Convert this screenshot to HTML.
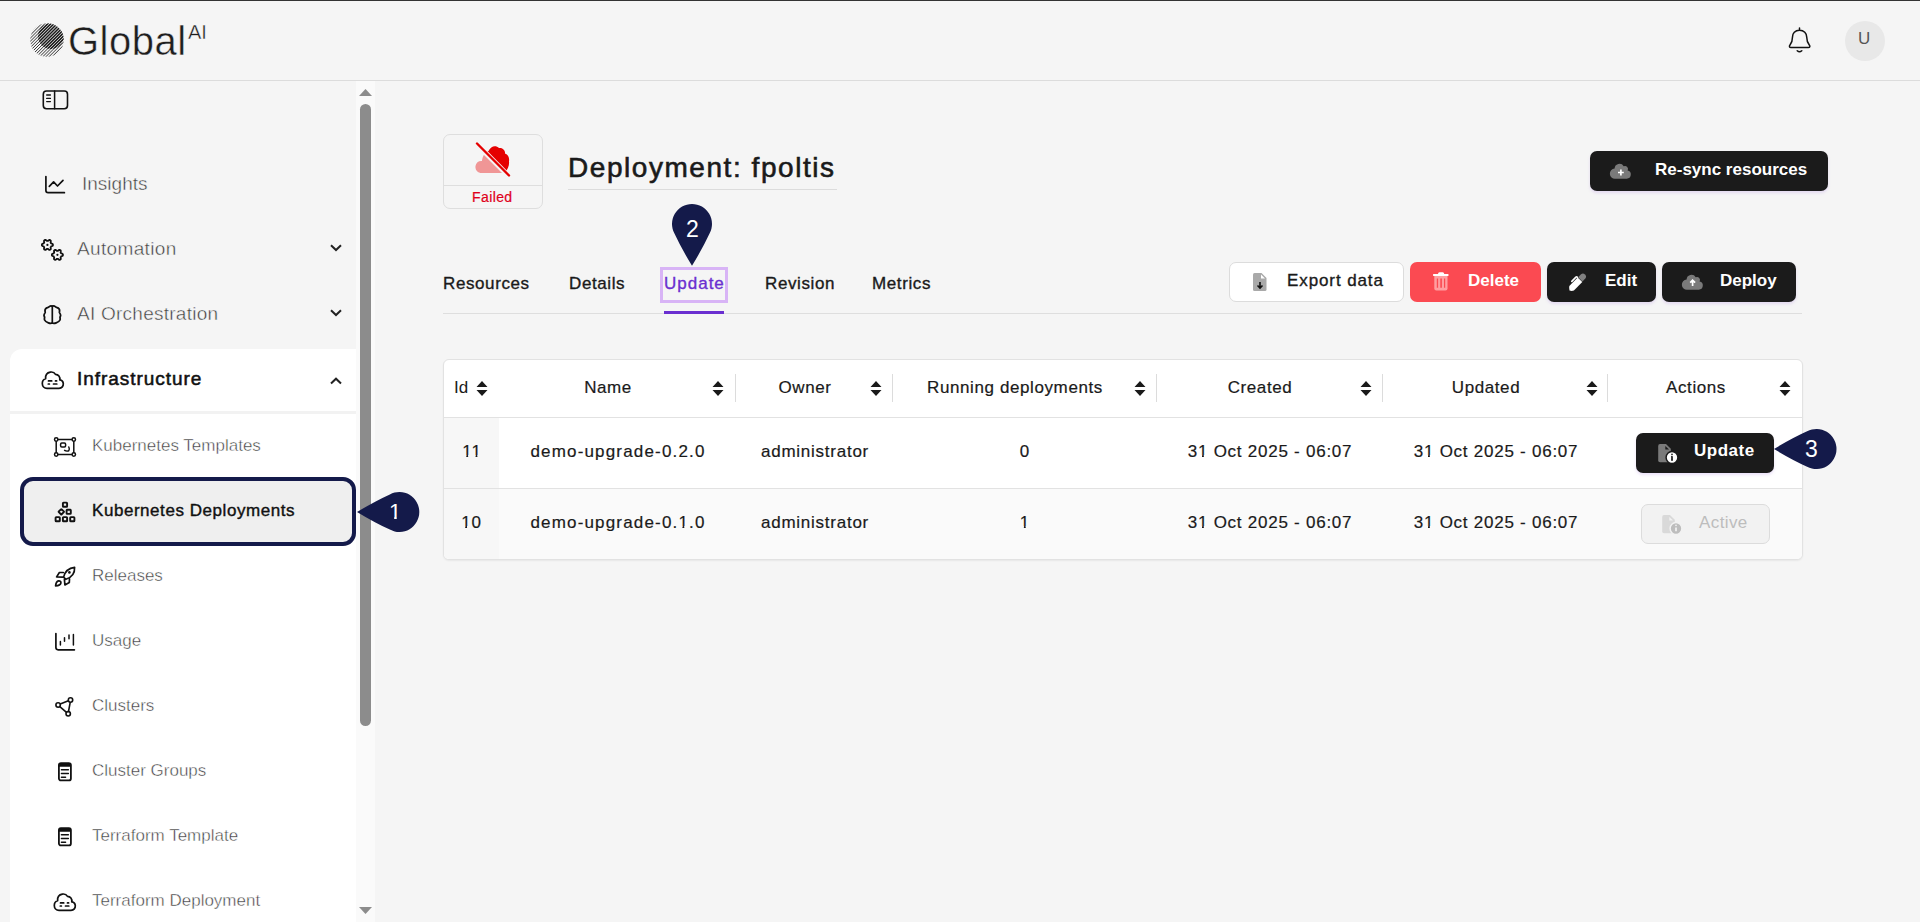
<!DOCTYPE html>
<html><head><meta charset="utf-8">
<style>
*{box-sizing:border-box;margin:0;padding:0}
html,body{width:1920px;height:922px;overflow:hidden;background:#f5f5f5;font-family:"Liberation Sans",sans-serif;color:#1a1a1a}
.a{position:absolute}
.t{position:absolute;white-space:nowrap;line-height:1em}
svg{position:absolute;overflow:visible}
</style></head><body>
<div class="a" style="left:0;top:0;width:1920px;height:1px;background:#333"></div>
<div class="a" style="left:0;top:80px;width:1920px;height:1px;background:#dcdcdc"></div>

<svg style="left:30px;top:23px" width="34" height="34" viewBox="0 0 34 34">
  <defs><clipPath id="lc"><circle cx="17" cy="17" r="16.8"/></clipPath>
  <clipPath id="lc2"><circle cx="21" cy="13" r="13"/></clipPath></defs>
  <g clip-path="url(#lc)" stroke="#1c1c1c" stroke-width="0.9" fill="none"><path d="M-40.0 40 L0.0 0 M-36.9 40 L3.1 0 M-33.8 40 L6.2 0 M-30.7 40 L9.3 0 M-27.6 40 L12.4 0 M-24.5 40 L15.5 0 M-21.4 40 L18.6 0 M-18.3 40 L21.7 0 M-15.2 40 L24.8 0 M-12.1 40 L27.9 0 M-9.0 40 L31.0 0 M-5.9 40 L34.1 0 M-2.8 40 L37.2 0 M0.3 40 L40.3 0 M3.4 40 L43.4 0 M6.5 40 L46.5 0 M9.6 40 L49.6 0 M12.7 40 L52.7 0 M15.8 40 L55.8 0 M18.9 40 L58.9 0 M22.0 40 L62.0 0 M25.1 40 L65.1 0 M28.2 40 L68.2 0 M31.3 40 L71.3 0 M34.4 40 L74.4 0 M37.5 40 L77.5 0 "/></g>
  <g clip-path="url(#lc2)" stroke="#1c1c1c" stroke-width="1.5" fill="none"><g clip-path="url(#lc)"><path d="M-40.0 40 L0.0 0 M-36.9 40 L3.1 0 M-33.8 40 L6.2 0 M-30.7 40 L9.3 0 M-27.6 40 L12.4 0 M-24.5 40 L15.5 0 M-21.4 40 L18.6 0 M-18.3 40 L21.7 0 M-15.2 40 L24.8 0 M-12.1 40 L27.9 0 M-9.0 40 L31.0 0 M-5.9 40 L34.1 0 M-2.8 40 L37.2 0 M0.3 40 L40.3 0 M3.4 40 L43.4 0 M6.5 40 L46.5 0 M9.6 40 L49.6 0 M12.7 40 L52.7 0 M15.8 40 L55.8 0 M18.9 40 L58.9 0 M22.0 40 L62.0 0 M25.1 40 L65.1 0 M28.2 40 L68.2 0 M31.3 40 L71.3 0 M34.4 40 L74.4 0 M37.5 40 L77.5 0 "/></g></g>
</svg>
<div class="t" style="left:68px;top:21px;font-size:40px;color:#1e1e1e;letter-spacing:0.5px;-webkit-text-stroke:0.45px #f5f5f5">Global</div>
<div class="t" style="left:188px;top:22px;font-size:20px;color:#1c1c1c;-webkit-text-stroke:0.4px #f5f5f5">AI</div>
<svg style="left:1785px;top:25px" width="30" height="30" viewBox="0 0 30 30"><path d="M14.5 5.3 C10 5.3 7.5 8.5 7.5 12 C7.5 15.5 7 17.5 5 20 C4 21.3 4.3 22.6 6 22.6 H23.3 C25 22.6 25.3 21.3 24.3 20 C22.3 17.5 21.7 15.5 21.7 12 C21.7 8.5 19 5.3 14.5 5.3 Z M14.5 3 V5.3" fill="none" stroke="#111" stroke-linecap="round" stroke-linejoin="round" stroke-width="1.5"/><path d="M12.2 25.8 Q14.5 27.8 16.8 25.8" fill="none" stroke="#111" stroke-linecap="round" stroke-linejoin="round" stroke-width="1.5"/></svg>
<div class="a" style="left:1845px;top:21px;width:40px;height:40px;border-radius:50%;background:#e8e8e8"></div>
<div class="t" style="left:1858px;top:30px;font-size:17px;color:#555;">U</div>
<div class="a" style="left:356px;top:81px;width:19px;height:841px;background:#fafafa"></div>
<svg style="left:359px;top:88px" width="13" height="8"><path d="M0 8 L6.5 1 L13 8Z" fill="#8c8c8c"/></svg>
<div class="a" style="left:360px;top:104px;width:11px;height:622px;border-radius:6px;background:#8c8c8c"></div>
<svg style="left:359px;top:907px" width="13" height="8"><path d="M0 0 L6.5 7 L13 0Z" fill="#8c8c8c"/></svg>
<svg style="left:40px;top:85px" width="32" height="30" viewBox="0 0 32 30"><rect x="3.3" y="6" width="24.2" height="17.7" rx="3.2" fill="none" stroke="#111" stroke-linecap="round" stroke-linejoin="round" stroke-width="1.6"/><path d="M14.6 6 V23.7" fill="none" stroke="#111" stroke-linecap="round" stroke-linejoin="round" stroke-width="1.5"/><path d="M6.7 10 H10.4 M6.7 13.4 H10.4 M6.7 16.6 H10.4" fill="none" stroke="#111" stroke-linecap="round" stroke-linejoin="round" stroke-width="1.4"/></svg>
<svg style="left:40px;top:170px" width="30" height="30" viewBox="0 0 30 30"><path d="M5.9 6.5 V20.5 Q5.9 22.7 8.1 22.7 H24.4" fill="none" stroke="#111" stroke-linecap="round" stroke-linejoin="round" stroke-width="1.7"/><path d="M9.3 16.3 L13.6 11.9 L17.5 16 L23 10.3" fill="none" stroke="#111" stroke-linecap="round" stroke-linejoin="round" stroke-width="1.7"/></svg>
<div class="t" style="left:82px;top:174px;font-size:19px;color:#3c3c3c;-webkit-text-stroke:0.45px #f5f5f5;">Insights</div>
<svg style="left:38px;top:235px" width="30" height="30" viewBox="0 0 30 30"><path d="M10.06 5.81 L10.41 5.49 L10.81 5.17 L11.25 4.92 L11.65 4.88 L11.98 5.04 L12.29 5.22 L12.59 5.42 L12.78 5.75 L12.79 6.26 L12.72 6.77 L12.63 7.23 L12.64 7.56 L12.79 7.78 L12.92 8.00 L13.04 8.24 L13.28 8.42 L13.72 8.57 L14.20 8.76 L14.64 9.02 L14.87 9.34 L14.90 9.70 L14.90 10.06 L14.88 10.42 L14.68 10.75 L14.25 11.01 L13.78 11.21 L13.32 11.36 L13.05 11.54 L12.93 11.77 L12.80 12.00 L12.66 12.22 L12.62 12.52 L12.71 12.98 L12.78 13.49 L12.79 14.00 L12.62 14.36 L12.32 14.56 L12.01 14.74 L11.69 14.90 L11.30 14.90 L10.86 14.66 L10.45 14.34 L10.10 14.03 L9.81 13.88 L9.55 13.90 L9.28 13.90 L9.02 13.88 L8.74 13.99 L8.39 14.31 L7.99 14.63 L7.55 14.88 L7.15 14.92 L6.82 14.76 L6.51 14.58 L6.21 14.38 L6.02 14.05 L6.01 13.54 L6.08 13.03 L6.17 12.57 L6.16 12.24 L6.01 12.02 L5.88 11.80 L5.76 11.56 L5.52 11.38 L5.08 11.23 L4.60 11.04 L4.16 10.78 L3.93 10.46 L3.90 10.10 L3.90 9.74 L3.92 9.38 L4.12 9.05 L4.55 8.79 L5.02 8.59 L5.48 8.44 L5.75 8.26 L5.87 8.03 L6.00 7.80 L6.14 7.58 L6.18 7.28 L6.09 6.82 L6.02 6.31 L6.01 5.80 L6.18 5.44 L6.48 5.24 L6.79 5.06 L7.11 4.90 L7.50 4.90 L7.94 5.14 L8.35 5.46 L8.70 5.77 L8.99 5.92 L9.25 5.90 L9.52 5.90 L9.78 5.92Z" fill="none" stroke="#111" stroke-linecap="round" stroke-linejoin="round" stroke-width="1.8"/><circle cx="9.4" cy="9.9" r="1.1" fill="#111"/><path d="M20.06 15.76 L20.41 15.44 L20.81 15.12 L21.25 14.87 L21.65 14.83 L21.98 14.99 L22.29 15.17 L22.59 15.37 L22.78 15.70 L22.79 16.21 L22.72 16.72 L22.63 17.18 L22.64 17.51 L22.79 17.73 L22.92 17.95 L23.04 18.19 L23.28 18.37 L23.72 18.52 L24.20 18.71 L24.64 18.97 L24.87 19.29 L24.90 19.65 L24.90 20.01 L24.88 20.37 L24.68 20.70 L24.25 20.96 L23.78 21.16 L23.32 21.31 L23.05 21.49 L22.93 21.72 L22.80 21.95 L22.66 22.17 L22.62 22.47 L22.71 22.93 L22.78 23.44 L22.79 23.95 L22.62 24.31 L22.32 24.51 L22.01 24.69 L21.69 24.85 L21.30 24.85 L20.86 24.61 L20.45 24.29 L20.10 23.98 L19.81 23.83 L19.55 23.85 L19.28 23.85 L19.02 23.83 L18.74 23.94 L18.39 24.26 L17.99 24.58 L17.55 24.83 L17.15 24.87 L16.82 24.71 L16.51 24.53 L16.21 24.33 L16.02 24.00 L16.01 23.49 L16.08 22.98 L16.17 22.52 L16.16 22.19 L16.01 21.97 L15.88 21.75 L15.76 21.51 L15.52 21.33 L15.08 21.18 L14.60 20.99 L14.16 20.73 L13.93 20.41 L13.90 20.05 L13.90 19.69 L13.92 19.33 L14.12 19.00 L14.55 18.74 L15.02 18.54 L15.48 18.39 L15.75 18.21 L15.87 17.98 L16.00 17.75 L16.14 17.53 L16.18 17.23 L16.09 16.77 L16.02 16.26 L16.01 15.75 L16.18 15.39 L16.48 15.19 L16.79 15.01 L17.11 14.85 L17.50 14.85 L17.94 15.09 L18.35 15.41 L18.70 15.72 L18.99 15.87 L19.25 15.85 L19.52 15.85 L19.78 15.87Z" fill="none" stroke="#111" stroke-linecap="round" stroke-linejoin="round" stroke-width="1.8"/><circle cx="19.4" cy="19.85" r="1.1" fill="#111"/></svg>
<div class="t" style="left:77px;top:239px;font-size:19px;color:#3c3c3c;-webkit-text-stroke:0.45px #f5f5f5;letter-spacing:0.35px">Automation</div>
<svg style="left:330px;top:244px" width="12" height="8"><path d="M1 1.2 L6 6 L11 1.2" fill="none" stroke="#222" stroke-width="2"/></svg>
<svg style="left:38px;top:300px" width="30" height="30" viewBox="0 0 30 30"><path d="M14.3 6.3 C13.5 5.8 12.2 5.9 11.3 6.6 C10.7 7.2 10.3 7.5 9.5 7.7 C8 8.1 7 9.3 7 10.8 C7 11.5 7.3 11.9 7.2 12.4 C7 13.2 6.1 14 6 15.2 C5.9 16.2 6.6 16.6 6.6 17.3 C6.5 18.2 6.2 19 6.6 20 C7.2 21.6 9 22.3 10.4 22.8 C11.6 23.3 13 23.6 14.3 23" fill="none" stroke="#111" stroke-linecap="round" stroke-linejoin="round" stroke-width="1.8"/><path d="M14.3 6.3 C13.5 5.8 12.2 5.9 11.3 6.6 C10.7 7.2 10.3 7.5 9.5 7.7 C8 8.1 7 9.3 7 10.8 C7 11.5 7.3 11.9 7.2 12.4 C7 13.2 6.1 14 6 15.2 C5.9 16.2 6.6 16.6 6.6 17.3 C6.5 18.2 6.2 19 6.6 20 C7.2 21.6 9 22.3 10.4 22.8 C11.6 23.3 13 23.6 14.3 23" transform="translate(28.6,0) scale(-1,1)" fill="none" stroke="#111" stroke-linecap="round" stroke-linejoin="round" stroke-width="1.8"/><path d="M14.3 6.3 V23" fill="none" stroke="#111" stroke-linecap="round" stroke-linejoin="round" stroke-width="1.7"/></svg>
<div class="t" style="left:77px;top:304px;font-size:19px;color:#3c3c3c;-webkit-text-stroke:0.45px #f5f5f5;letter-spacing:0.25px">AI Orchestration</div>
<svg style="left:330px;top:309px" width="12" height="8"><path d="M1 1.2 L6 6 L11 1.2" fill="none" stroke="#222" stroke-width="2"/></svg>
<div class="a" style="left:10px;top:349px;width:346px;height:573px;background:#fff;border-top-left-radius:12px"></div>
<div class="a" style="left:10px;top:411px;width:346px;height:3px;background:#f2f2f2"></div>
<svg style="left:38px;top:365px" width="30" height="30" viewBox="0 0 30 30"><path d="M9 23.3 H21 C24 23.3 25.4 21 25.3 18.8 C25.2 16.7 23.8 15 21.8 14.8 C22.2 11.8 20.5 9.5 17.5 9.3 C16.3 7.2 14.2 6.8 12.3 7.1 C9.5 7.6 7.3 10 7.6 13.7 C5.3 14.3 4.3 16.4 4.3 18.5 C4.3 21.2 6.2 23.3 9 23.3 Z" fill="none" stroke="#111" stroke-linecap="round" stroke-linejoin="round" stroke-width="1.7"/><path d="M10.5 15.9 H13.7 M17.5 15.9 H18.6 M10.3 19 H11.4 M15.5 19 H18.8" fill="none" stroke="#111" stroke-linecap="round" stroke-linejoin="round" stroke-width="1.7"/></svg>
<div class="t" style="left:77px;top:369px;font-size:19px;color:#111;letter-spacing:0.95px;-webkit-text-stroke:0.55px #111">Infrastructure</div>
<svg style="left:330px;top:376px" width="12" height="9"><path d="M1 7.5 L6 2.7 L11 7.5" fill="none" stroke="#222" stroke-width="2"/></svg>
<svg style="left:50px;top:432px" width="30" height="30" viewBox="0 0 30 30"><path d="M7.9 7.5 H22.1 M7.9 22.5 H22.1 M6.2 9.2 V20.8 M23.8 9.2 V20.8" fill="none" stroke="#111" stroke-linecap="round" stroke-linejoin="round" stroke-width="1.5"/><circle cx="6.2" cy="7.5" r="1.7" fill="#fff" stroke="#111" stroke-width="1.5"/><circle cx="23.8" cy="7.5" r="1.7" fill="#fff" stroke="#111" stroke-width="1.5"/><circle cx="6.2" cy="22.5" r="1.7" fill="#fff" stroke="#111" stroke-width="1.5"/><circle cx="23.8" cy="22.5" r="1.7" fill="#fff" stroke="#111" stroke-width="1.5"/><rect x="10.6" y="11" width="5" height="3.9" rx="1.2" fill="none" stroke="#111" stroke-linecap="round" stroke-linejoin="round" stroke-width="1.5"/><path d="M18.8 15 C19.5 16.5 19.4 18 18.8 18.6 C18.2 19.2 16 19.2 14.6 18.3" fill="none" stroke="#111" stroke-linecap="round" stroke-linejoin="round" stroke-width="1.5"/></svg>
<div class="t" style="left:92px;top:437px;font-size:17px;color:#3c3c3c;-webkit-text-stroke:0.45px #fff;">Kubernetes Templates</div>
<div class="a" style="left:20px;top:477px;width:336px;height:69px;border:4.5px solid #141a4a;border-radius:13px;background:#efefef"></div>
<svg style="left:50px;top:497px" width="30" height="30" viewBox="0 0 30 30"><rect x="12.9" y="5.6" width="4.2" height="4.2" rx="0.6" fill="none" stroke="#111" stroke-linecap="round" stroke-linejoin="round" stroke-width="1.9"/><rect x="9.3" y="12.8" width="4" height="4" rx="0.5" transform="rotate(45 11.3 14.8)" fill="none" stroke="#111" stroke-linecap="round" stroke-linejoin="round" stroke-width="1.9"/><rect x="16.599999999999998" y="12.700000000000001" width="4.2" height="4.2" rx="0.6" fill="none" stroke="#111" stroke-linecap="round" stroke-linejoin="round" stroke-width="1.9"/><rect x="5.6" y="20.099999999999998" width="4.2" height="4.2" rx="0.6" fill="none" stroke="#111" stroke-linecap="round" stroke-linejoin="round" stroke-width="1.9"/><rect x="12.9" y="20.099999999999998" width="4.2" height="4.2" rx="0.6" fill="none" stroke="#111" stroke-linecap="round" stroke-linejoin="round" stroke-width="1.9"/><rect x="20.2" y="20.099999999999998" width="4.2" height="4.2" rx="0.6" fill="none" stroke="#111" stroke-linecap="round" stroke-linejoin="round" stroke-width="1.9"/></svg>
<div class="t" style="left:92px;top:502px;font-size:17px;color:#111;letter-spacing:0.55px;-webkit-text-stroke:0.4px #111">Kubernetes Deployments</div>
<svg style="left:354.70px;top:490.00px" width="66" height="44" viewBox="0 0 66 44"><path d="M2.00 22.00 Q20.06 11.07 34.84 4.38 A20 20 0 1 1 34.84 39.62 Q20.06 32.93 2.00 22.00 Z" fill="#141a4a"/></svg>
<div class="t" style="left:389px;top:501px;font-size:22px;color:#fff;"><span style="display:inline-block;clip-path:polygon(0 0,100% 0,100% 15.9px,7.7px 15.9px,7.7px 100%,5.2px 100%,5.2px 15.9px,0 15.9px)">1</span></div>
<svg style="left:50px;top:560px" width="30" height="30" viewBox="0 0 30 30"><path d="M13.6 17.1 C15 11.5 19 8 24.6 7.4 C24.9 13 21.5 17.5 15.9 19.3 Z" fill="none" stroke="#111" stroke-linecap="round" stroke-linejoin="round" stroke-width="1.7"/><circle cx="19.4" cy="12.4" r="1.3" fill="#111"/><path d="M13.3 12.5 H9.4 L6.6 16.9 L12.6 17.2" fill="none" stroke="#111" stroke-linecap="round" stroke-linejoin="round" stroke-width="1.7"/><path d="M14.4 19.3 L14.9 25 L19.3 22.4 L19.5 18.9" fill="none" stroke="#111" stroke-linecap="round" stroke-linejoin="round" stroke-width="1.7"/><path d="M5.6 25.9 C5.8 23.5 7 21.2 8.6 20.9 C10 20.7 11.2 21.8 10.9 23 C10.5 24.8 8 25.8 5.6 25.9 Z" fill="none" stroke="#111" stroke-linecap="round" stroke-linejoin="round" stroke-width="1.7"/></svg>
<div class="t" style="left:92px;top:567px;font-size:17px;color:#3c3c3c;-webkit-text-stroke:0.45px #fff;">Releases</div>
<svg style="left:50px;top:627px" width="30" height="30" viewBox="0 0 30 30"><path d="M5.9 6.5 V20.6 Q5.9 22.8 8.1 22.8 H24.4" fill="none" stroke="#111" stroke-linecap="round" stroke-linejoin="round" stroke-width="1.7"/><path d="M10.4 14.6 V18.1 M14.5 10.7 V14.2 M19 8.1 V11.7 M23.4 7.6 V18.1" fill="none" stroke="#111" stroke-linecap="round" stroke-linejoin="round" stroke-width="1.5"/></svg>
<div class="t" style="left:92px;top:632px;font-size:17px;color:#3c3c3c;-webkit-text-stroke:0.45px #fff;">Usage</div>
<svg style="left:50px;top:692px" width="30" height="30" viewBox="0 0 30 30"><path d="M10.2 12 L18.4 8.7 M20.2 10.3 L18.5 19.5 M16.5 20.4 L9.8 14.6" fill="none" stroke="#111" stroke-linecap="round" stroke-linejoin="round" stroke-width="1.6"/><circle cx="8.1" cy="13" r="2.2" fill="#fff" stroke="#111" stroke-width="1.6"/><circle cx="20.5" cy="8" r="2.2" fill="#fff" stroke="#111" stroke-width="1.6"/><circle cx="18.2" cy="21.8" r="2.2" fill="#fff" stroke="#111" stroke-width="1.6"/></svg>
<div class="t" style="left:92px;top:697px;font-size:17px;color:#3c3c3c;-webkit-text-stroke:0.45px #fff;">Clusters</div>
<svg style="left:50px;top:757px" width="30" height="30" viewBox="0 0 30 30"><rect x="8.9" y="6.1" width="12" height="17.3" rx="2" fill="none" stroke="#111" stroke-linecap="round" stroke-linejoin="round" stroke-width="1.8"/><path d="M8.9 8.2 Q8.9 6.1 11 6.1 H18.8 Q20.9 6.1 20.9 8.2 V9.8 H8.9Z" fill="#111"/><path d="M11.4 12.7 H18.4 M11.4 16.5 H18.4 M11.4 20.3 H15.6" fill="none" stroke="#111" stroke-linecap="round" stroke-linejoin="round" stroke-width="1.4"/></svg>
<div class="t" style="left:92px;top:762px;font-size:17px;color:#3c3c3c;-webkit-text-stroke:0.45px #fff;">Cluster Groups</div>
<svg style="left:50px;top:822px" width="30" height="30" viewBox="0 0 30 30"><rect x="8.9" y="6.1" width="12" height="17.3" rx="2" fill="none" stroke="#111" stroke-linecap="round" stroke-linejoin="round" stroke-width="1.8"/><path d="M8.9 8.2 Q8.9 6.1 11 6.1 H18.8 Q20.9 6.1 20.9 8.2 V9.8 H8.9Z" fill="#111"/><path d="M11.4 12.7 H18.4 M11.4 16.5 H18.4 M11.4 20.3 H15.6" fill="none" stroke="#111" stroke-linecap="round" stroke-linejoin="round" stroke-width="1.4"/></svg>
<div class="t" style="left:92px;top:827px;font-size:17px;color:#3c3c3c;-webkit-text-stroke:0.45px #fff;">Terraform Template</div>
<svg style="left:50px;top:887px" width="30" height="30" viewBox="0 0 30 30"><path d="M9 23.3 H21 C24 23.3 25.4 21 25.3 18.8 C25.2 16.7 23.8 15 21.8 14.8 C22.2 11.8 20.5 9.5 17.5 9.3 C16.3 7.2 14.2 6.8 12.3 7.1 C9.5 7.6 7.3 10 7.6 13.7 C5.3 14.3 4.3 16.4 4.3 18.5 C4.3 21.2 6.2 23.3 9 23.3 Z" fill="none" stroke="#111" stroke-linecap="round" stroke-linejoin="round" stroke-width="1.7"/><path d="M10.5 15.9 H13.7 M17.5 15.9 H18.6 M10.3 19 H11.4 M15.5 19 H18.8" fill="none" stroke="#111" stroke-linecap="round" stroke-linejoin="round" stroke-width="1.7"/></svg>
<div class="t" style="left:92px;top:892px;font-size:17px;color:#3c3c3c;-webkit-text-stroke:0.45px #fff;">Terraform Deployment</div>


<!-- status card -->
<div class="a" style="left:443px;top:134px;width:100px;height:75px;border:1px solid #dedede;border-radius:7px"></div>
<div class="a" style="left:444px;top:185px;width:98px;height:1px;background:#dedede"></div>
<svg style="left:474px;top:142px" width="38" height="36" viewBox="0 0 38 36">
  <defs>
   <clipPath id="cr"><path d="M2 1 L37 36 L38 0Z"/></clipPath>
   <clipPath id="cl"><path d="M0 3 L0 36 L33 36Z"/></clipPath>
  </defs>
  <path clip-path="url(#cr)" d="M8 31 C3 31 1 27 1.5 24 C2 20.5 5 18.5 8 19 C8.5 14 11 10 14.5 9 C17 3.5 22 3 25 6 C28 5.5 31.5 8 31 11.5 C34.5 12.5 35.5 16 35 19.5 C35.5 23 34 27 31 31 Z" fill="#e50000"/>
  <path clip-path="url(#cl)" d="M8 31 C3 31 1 27 1.5 24 C2 20.5 5 18.5 8 19 C8.5 14 11 10 14.5 9 C17 3.5 22 3 25 6 C28 5.5 31.5 8 31 11.5 C34.5 12.5 35.5 16 35 19.5 C35.5 23 34 27 31 31 Z" fill="#f09696"/>
  <path d="M3 1.5 L35 33.5" stroke="#f5f5f5" stroke-width="4"/>
  <path d="M3 1.5 L35 33.5" stroke="#e50000" stroke-width="2.4" stroke-linecap="round"/>
</svg>
<div class="t" style="left:472px;top:190px;font-size:14px;letter-spacing:0.4px;color:#e0001b;-webkit-text-stroke:0.2px #e0001b">Failed</div>

<!-- title -->
<div class="t" style="left:568px;top:154px;font-size:28px;color:#1a1a1a;-webkit-text-stroke:0.6px #1a1a1a;letter-spacing:1.55px">Deployment: fpoltis</div>
<div class="a" style="left:568px;top:189px;width:269px;height:1px;background:#dcdcdc"></div>

<!-- resync -->
<div class="a" style="left:1590px;top:151px;width:238px;height:40px;border-radius:7px;background:#1b1b1b;box-shadow:0 2px 3px rgba(180,140,230,0.25)"></div>
<svg style="left:1603px;top:154px" width="32" height="30" viewBox="0 0 32 30">
  <path d="M12.2 24.7 H23.6 A4.1 4.1 0 0 0 24.6 16.6 A3.1 3.1 0 0 0 20.7 12.2 A4.9 4.9 0 0 0 11.6 14.6 A5 5 0 0 0 12.2 24.7Z" fill="#7a7a7a"/>
  <path d="M17.9 15.6 V21.4 M15 18.5 H20.8" stroke="#fff" stroke-width="1.7"/>
</svg>
<div class="t" style="left:1655px;top:161px;font-size:17px;color:#fff;font-weight:bold">Re-sync resources</div>

<!-- tabs -->
<div class="t" style="left:443px;top:275px;font-size:17px;color:#1a1a1a;-webkit-text-stroke:0.35px #1a1a1a;letter-spacing:0.6px">Resources</div>
<div class="t" style="left:569px;top:275px;font-size:17px;color:#1a1a1a;-webkit-text-stroke:0.35px #1a1a1a;letter-spacing:0.6px">Details</div>
<div class="t" style="left:664px;top:275px;font-size:17px;color:#6a2fd0;-webkit-text-stroke:0.35px #6a2fd0;letter-spacing:1px">Update</div>
<div class="t" style="left:765px;top:275px;font-size:17px;color:#1a1a1a;-webkit-text-stroke:0.35px #1a1a1a;letter-spacing:0.6px">Revision</div>
<div class="t" style="left:872px;top:275px;font-size:17px;color:#1a1a1a;-webkit-text-stroke:0.35px #1a1a1a;letter-spacing:0.6px">Metrics</div>
<div class="a" style="left:660px;top:267px;width:68px;height:36px;border:3px solid #d8b4f6"></div>
<div class="a" style="left:443px;top:313px;width:1359px;height:1px;background:#dedede"></div>
<div class="a" style="left:664px;top:311px;width:60px;height:3px;background:#6a2fd0"></div>
<!-- marker 2 -->
<svg style="left:670.00px;top:202.00px" width="44" height="66" viewBox="0 0 44 66"><path d="M22.00 63.70 Q11.12 46.04 4.45 31.59 A20 20 0 1 1 39.55 31.59 Q32.88 46.04 22.00 63.70 Z" fill="#141a4a"/></svg>
<div class="t" style="left:686px;top:218px;font-size:23px;color:#fff">2</div>

<!-- action buttons -->
<div class="a" style="left:1229px;top:262px;width:175px;height:40px;border:1px solid #dcdcdc;border-radius:7px;background:#fff"></div>
<svg style="left:1253px;top:273px" width="14" height="18" viewBox="0 0 14 18">
  <path d="M1.5 0 H8.5 L13.5 5 V16.5 Q13.5 18 12 18 H1.5 Q0 18 0 16.5 V1.5 Q0 0 1.5 0Z" fill="#a9a9a9"/>
  <path d="M8 1.5 V5.5 H12" fill="#fff"/>
  <path d="M7 9 V15 M4.5 12.5 L7 15 L9.5 12.5" fill="none" stroke="#111" stroke-width="1.6"/>
</svg>
<div class="t" style="left:1287px;top:272px;font-size:17px;color:#1a1a1a;-webkit-text-stroke:0.35px #1a1a1a;letter-spacing:0.9px">Export data</div>

<div class="a" style="left:1410px;top:262px;width:131px;height:40px;border-radius:7px;background:#fb4a52"></div>
<svg style="left:1425px;top:265px" width="32" height="32" viewBox="0 0 32 32">
  <path d="M9.3 11.1 H22.5 V23.4 Q22.5 25.4 20.5 25.4 H11.3 Q9.3 25.4 9.3 23.4Z" fill="#ff9ea1"/>
  <path d="M11.8 13.4 H13.1 V22.8 H11.8Z M15.3 13.4 H16.9 V22.8 H15.3Z M19 13.4 H20.2 V22.8 H19Z" fill="#fb4a52"/>
  <path d="M8.6 9 H23 Q23.6 9 23.6 9.9 Q23.6 10.9 23 10.9 H8.6 Q8 10.9 8 9.9 Q8 9 8.6 9Z" fill="#fff"/>
  <path d="M13 9 Q13 7.2 14.5 7.2 H17.7 Q19.2 7.2 19.2 9Z" fill="#fff"/>
</svg>
<div class="t" style="left:1468px;top:272px;font-size:17px;color:#fff;font-weight:bold">Delete</div>

<div class="a" style="left:1547px;top:262px;width:109px;height:40px;border-radius:7px;background:#1b1b1b;box-shadow:0 2px 3px rgba(180,140,230,0.25)"></div>
<svg style="left:1560px;top:265px" width="40" height="35" viewBox="0 0 40 35">
  <path d="M9.5 25.6 Q8.9 23 9.3 21 L17.7 12.4 L22.3 16.9 L13.9 25.5 Q12 26.2 9.5 25.6Z" fill="#fff"/>
  <path d="M18.2 12.2 L21 9.3 Q23 7.6 25 9.4 Q27 11.4 25.3 13.5 L22.4 16.5Z" fill="#808080"/>
  <path d="M11.8 16.4 L15.9 12.1 Q16.6 11.5 17.4 12.3" fill="none" stroke="#fff" stroke-width="1.6" stroke-linejoin="round" stroke-linecap="round"/>
</svg>
<div class="t" style="left:1605px;top:272px;font-size:17px;color:#fff;font-weight:bold">Edit</div>

<div class="a" style="left:1662px;top:262px;width:134px;height:40px;border-radius:7px;background:#1b1b1b;box-shadow:0 2px 3px rgba(180,140,230,0.25)"></div>
<svg style="left:1675px;top:265px" width="32" height="30" viewBox="0 0 32 30">
  <path d="M12.2 24.7 H23.6 A4.1 4.1 0 0 0 24.6 16.6 A3.1 3.1 0 0 0 20.7 12.2 A4.9 4.9 0 0 0 11.6 14.6 A5 5 0 0 0 12.2 24.7Z" fill="#7a7a7a"/>
  <path d="M17.6 15 V21 M15.2 17.6 L17.6 15.1 L20.1 17.6" fill="none" stroke="#fff" stroke-width="1.7"/>
</svg>
<div class="t" style="left:1720px;top:272px;font-size:17px;color:#fff;font-weight:bold">Deploy</div>


<!-- table -->
<div class="a" style="left:443px;top:359px;width:1360px;height:201px;border:1px solid #e2e2e2;border-radius:6px;background:#fff;box-shadow:0 1px 2px rgba(0,0,0,0.06);overflow:hidden">
  <div class="a" style="left:0;top:57px;width:1358px;height:1px;background:#e2e2e2"></div>
  <div class="a" style="left:0;top:58px;width:1358px;height:70px;background:#fff"></div>
  <div class="a" style="left:0;top:128px;width:1358px;height:1px;background:#e2e2e2"></div>
  <div class="a" style="left:0;top:129px;width:1358px;height:71px;background:#fafafa"></div>
  <div class="a" style="left:0;top:58px;width:55px;height:70px;background:#f7f7f7"></div>
  <div class="a" style="left:0;top:129px;width:55px;height:71px;background:#f7f7f7"></div>
</div>
<div class="t" style="left:454px;top:379px;font-size:17px;color:#1a1a1a">Id</div>
<div class="t" style="left:458.0px;top:379px;width:300px;text-align:center;font-size:17px;color:#1a1a1a;-webkit-text-stroke:0.2px #1a1a1a;letter-spacing:0.6px">Name</div>
<div class="t" style="left:655.0px;top:379px;width:300px;text-align:center;font-size:17px;color:#1a1a1a;-webkit-text-stroke:0.2px #1a1a1a;letter-spacing:0.6px">Owner</div>
<div class="t" style="left:865.0px;top:379px;width:300px;text-align:center;font-size:17px;color:#1a1a1a;-webkit-text-stroke:0.2px #1a1a1a;letter-spacing:0.6px">Running deployments</div>
<div class="t" style="left:1110.0px;top:379px;width:300px;text-align:center;font-size:17px;color:#1a1a1a;-webkit-text-stroke:0.2px #1a1a1a;letter-spacing:0.6px">Created</div>
<div class="t" style="left:1336.0px;top:379px;width:300px;text-align:center;font-size:17px;color:#1a1a1a;-webkit-text-stroke:0.2px #1a1a1a;letter-spacing:0.6px">Updated</div>
<div class="t" style="left:1546.0px;top:379px;width:300px;text-align:center;font-size:17px;color:#1a1a1a;-webkit-text-stroke:0.2px #1a1a1a;letter-spacing:0.6px">Actions</div>
<svg style="left:476px;top:380px" width="12" height="17" viewBox="0 0 12 17"><path d="M0.5 7 L6 1 L11.5 7Z M0.5 10 L6 16 L11.5 10Z" fill="#1a1a1a"/></svg>
<svg style="left:712px;top:380px" width="12" height="17" viewBox="0 0 12 17"><path d="M0.5 7 L6 1 L11.5 7Z M0.5 10 L6 16 L11.5 10Z" fill="#1a1a1a"/></svg>
<svg style="left:870px;top:380px" width="12" height="17" viewBox="0 0 12 17"><path d="M0.5 7 L6 1 L11.5 7Z M0.5 10 L6 16 L11.5 10Z" fill="#1a1a1a"/></svg>
<svg style="left:1134px;top:380px" width="12" height="17" viewBox="0 0 12 17"><path d="M0.5 7 L6 1 L11.5 7Z M0.5 10 L6 16 L11.5 10Z" fill="#1a1a1a"/></svg>
<svg style="left:1360px;top:380px" width="12" height="17" viewBox="0 0 12 17"><path d="M0.5 7 L6 1 L11.5 7Z M0.5 10 L6 16 L11.5 10Z" fill="#1a1a1a"/></svg>
<svg style="left:1586px;top:380px" width="12" height="17" viewBox="0 0 12 17"><path d="M0.5 7 L6 1 L11.5 7Z M0.5 10 L6 16 L11.5 10Z" fill="#1a1a1a"/></svg>
<svg style="left:1779px;top:380px" width="12" height="17" viewBox="0 0 12 17"><path d="M0.5 7 L6 1 L11.5 7Z M0.5 10 L6 16 L11.5 10Z" fill="#1a1a1a"/></svg>
<div class="a" style="left:735px;top:374px;width:1px;height:28px;background:#dcdcdc"></div>
<div class="a" style="left:892px;top:374px;width:1px;height:28px;background:#dcdcdc"></div>
<div class="a" style="left:1156px;top:374px;width:1px;height:28px;background:#dcdcdc"></div>
<div class="a" style="left:1382px;top:374px;width:1px;height:28px;background:#dcdcdc"></div>
<div class="a" style="left:1607px;top:374px;width:1px;height:28px;background:#dcdcdc"></div>
<div class="t" style="left:321.5px;top:442.5px;width:300px;text-align:center;font-size:17px;color:#1a1a1a;-webkit-text-stroke:0.2px #1a1a1a;letter-spacing:-0.2px"><span style="display:inline-block;clip-path:polygon(0 0,100% 0,100% 12.6px,5.9px 12.6px,5.9px 100%,4.05px 100%,4.05px 12.6px,0 12.6px)">1</span><span style="display:inline-block;clip-path:polygon(0 0,100% 0,100% 12.6px,5.9px 12.6px,5.9px 100%,4.05px 100%,4.05px 12.6px,0 12.6px)">1</span></div>
<div class="t" style="left:468.0px;top:442.5px;width:300px;text-align:center;font-size:17px;color:#1a1a1a;-webkit-text-stroke:0.2px #1a1a1a;letter-spacing:1.17px">demo-upgrade-0.2.0</div>
<div class="t" style="left:665.0px;top:442.5px;width:300px;text-align:center;font-size:17px;color:#1a1a1a;-webkit-text-stroke:0.2px #1a1a1a;letter-spacing:0.75px">administrator</div>
<div class="t" style="left:875.0px;top:442.5px;width:300px;text-align:center;font-size:17px;color:#1a1a1a;-webkit-text-stroke:0.2px #1a1a1a;letter-spacing:0.9px">0</div>
<div class="t" style="left:1120.0px;top:442.5px;width:300px;text-align:center;font-size:17px;color:#1a1a1a;-webkit-text-stroke:0.2px #1a1a1a;letter-spacing:0.75px">3<span style="display:inline-block;clip-path:polygon(0 0,100% 0,100% 12.6px,5.9px 12.6px,5.9px 100%,4.05px 100%,4.05px 12.6px,0 12.6px)">1</span> Oct 2025 - 06:07</div>
<div class="t" style="left:1346.0px;top:442.5px;width:300px;text-align:center;font-size:17px;color:#1a1a1a;-webkit-text-stroke:0.2px #1a1a1a;letter-spacing:0.75px">3<span style="display:inline-block;clip-path:polygon(0 0,100% 0,100% 12.6px,5.9px 12.6px,5.9px 100%,4.05px 100%,4.05px 12.6px,0 12.6px)">1</span> Oct 2025 - 06:07</div>
<div class="t" style="left:321.5px;top:513.5px;width:300px;text-align:center;font-size:17px;color:#1a1a1a;-webkit-text-stroke:0.2px #1a1a1a;letter-spacing:0.9px"><span style="display:inline-block;clip-path:polygon(0 0,100% 0,100% 12.6px,5.9px 12.6px,5.9px 100%,4.05px 100%,4.05px 12.6px,0 12.6px)">1</span>0</div>
<div class="t" style="left:468.0px;top:513.5px;width:300px;text-align:center;font-size:17px;color:#1a1a1a;-webkit-text-stroke:0.2px #1a1a1a;letter-spacing:1.17px">demo-upgrade-0.<span style="display:inline-block;clip-path:polygon(0 0,100% 0,100% 12.6px,5.9px 12.6px,5.9px 100%,4.05px 100%,4.05px 12.6px,0 12.6px)">1</span>.0</div>
<div class="t" style="left:665.0px;top:513.5px;width:300px;text-align:center;font-size:17px;color:#1a1a1a;-webkit-text-stroke:0.2px #1a1a1a;letter-spacing:0.75px">administrator</div>
<div class="t" style="left:875.0px;top:513.5px;width:300px;text-align:center;font-size:17px;color:#1a1a1a;-webkit-text-stroke:0.2px #1a1a1a;letter-spacing:0.9px"><span style="display:inline-block;clip-path:polygon(0 0,100% 0,100% 12.6px,5.9px 12.6px,5.9px 100%,4.05px 100%,4.05px 12.6px,0 12.6px)">1</span></div>
<div class="t" style="left:1120.0px;top:513.5px;width:300px;text-align:center;font-size:17px;color:#1a1a1a;-webkit-text-stroke:0.2px #1a1a1a;letter-spacing:0.75px">3<span style="display:inline-block;clip-path:polygon(0 0,100% 0,100% 12.6px,5.9px 12.6px,5.9px 100%,4.05px 100%,4.05px 12.6px,0 12.6px)">1</span> Oct 2025 - 06:07</div>
<div class="t" style="left:1346.0px;top:513.5px;width:300px;text-align:center;font-size:17px;color:#1a1a1a;-webkit-text-stroke:0.2px #1a1a1a;letter-spacing:0.75px">3<span style="display:inline-block;clip-path:polygon(0 0,100% 0,100% 12.6px,5.9px 12.6px,5.9px 100%,4.05px 100%,4.05px 12.6px,0 12.6px)">1</span> Oct 2025 - 06:07</div>

<!-- update btn -->
<div class="a" style="left:1636px;top:433px;width:138px;height:40px;border-radius:7px;background:#1b1b1b;box-shadow:0 2px 3px rgba(180,140,230,0.25)"></div>
<svg style="left:1658px;top:444px" width="21" height="20" viewBox="0 0 21 20">
  <path d="M2 0 H8 L12.8 4.8 V16.5 Q12.8 18.3 11 18.3 H2 Q0.2 18.3 0.2 16.5 V2 Q0.2 0 2 0Z" fill="#7a7a7a"/>
  <path d="M7.3 2 V5.6 H11" fill="#1b1b1b"/>
  <circle cx="14" cy="13.5" r="5.9" fill="#fff" stroke="#1b1b1b" stroke-width="1.5"/>
  <path d="M14 12.4 V16.2" stroke="#1b1b1b" stroke-width="1.7"/>
  <path d="M13 12.4 H14.6 M13 16.2 H15" stroke="#1b1b1b" stroke-width="0.9"/>
  <circle cx="14" cy="10.3" r="0.85" fill="#1b1b1b"/>
</svg>
<div class="t" style="left:1694px;top:442px;font-size:17px;color:#fff;font-weight:bold;letter-spacing:0.5px">Update</div>
<!-- marker 3 -->
<svg style="left:1771.50px;top:427.00px" width="66" height="44" viewBox="0 0 66 44"><path d="M2.00 22.00 Q20.20 11.06 35.09 4.35 A20 20 0 1 1 35.09 39.65 Q20.20 32.94 2.00 22.00 Z" fill="#141a4a"/></svg>
<div class="t" style="left:1805px;top:438px;font-size:23px;color:#fff">3</div>

<!-- active btn -->
<div class="a" style="left:1641px;top:504px;width:129px;height:40px;border-radius:7px;background:#f2f2f2;border:1px solid #dcdcdc"></div>
<svg style="left:1662px;top:515px" width="21" height="20" viewBox="0 0 21 20">
  <path d="M2 0 H8 L12.8 4.8 V16.5 Q12.8 18.3 11 18.3 H2 Q0.2 18.3 0.2 16.5 V2 Q0.2 0 2 0Z" fill="#d9d9d9"/>
  <path d="M7.3 2 V5.6 H11" fill="#f2f2f2"/>
  <circle cx="14" cy="13.5" r="5.9" fill="#bdbdbd" stroke="#f2f2f2" stroke-width="1.5"/>
  <path d="M14 12.4 V16.2" stroke="#f2f2f2" stroke-width="1.7"/>
  <circle cx="14" cy="10.3" r="0.85" fill="#f2f2f2"/>
</svg>
<div class="t" style="left:1699px;top:514px;font-size:17px;color:#bdbdbd;letter-spacing:0.4px">Active</div>


</body></html>
